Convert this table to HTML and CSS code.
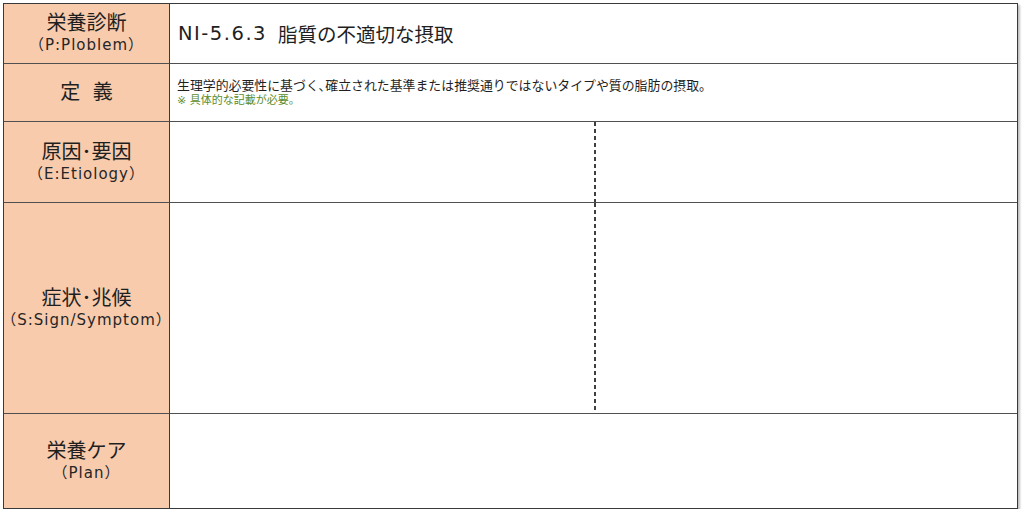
FILE: index.html
```html
<!DOCTYPE html>
<html lang="ja">
<head>
<meta charset="utf-8">
<link rel="stylesheet" href="styles.css">
</head>
<body>
<div class="sheet">
  <div class="label"><div class="main">栄養診断</div><div class="sub">（P:Ploblem）</div></div>
  <div class="cell title"><span class="code">NI-5.6.3</span>脂質の不適切な摂取</div>

  <div class="label"><div class="main wide">定 義</div></div>
  <div class="cell def">
    <div class="def-text">生理学的必要性に基づく､確立された基準または推奨通りではないタイプや質の脂肪の摂取。</div>
    <div class="note">※ 具体的な記載が必要。</div>
  </div>

  <div class="label"><div class="main">原因･要因</div><div class="sub">（E:Etiology）</div></div>
  <div class="cell split"><div class="half"></div><div class="half"></div></div>

  <div class="label"><div class="main">症状･兆候</div><div class="sub">（S:Sign/Symptom）</div></div>
  <div class="cell split"><div class="half"></div><div class="half"></div></div>

  <div class="label"><div class="main">栄養ケア</div><div class="sub">（Plan）</div></div>
  <div class="cell"></div>
</div>
</body>
</html>
```
FILE: styles.css
```css
html, body {
  margin: 0;
  padding: 0;
  background: #ffffff;
}
body {
  padding: 3px 0 0 3px;
  font-family: "DejaVu Sans", "Noto Sans CJK JP", sans-serif;
  color: #262626;
}
.sheet {
  width: 1013px;
  height: 504px;
  display: grid;
  grid-template-columns: 166px 1fr;
  grid-template-rows: 60px 58px 81px 211px 1fr;
  border: 1.5px solid #3a3a3a;
  box-shadow: 2px 2px 2px rgba(0,0,0,0.25);
  box-sizing: content-box;
}
.label {
  background: #f8cbad;
  border-right: 1px solid #3a3a3a;
  border-bottom: 1px solid #505050;
  display: flex;
  flex-direction: column;
  align-items: center;
  justify-content: center;
  text-align: center;
}
.cell {
  border-bottom: 1px solid #505050;
  background: #fff;
}
.label:nth-last-child(2), .cell:last-child {
  border-bottom: none;
}
.main {
  font-size: 20px;
  line-height: 23px;
  color: #1f1f1f;
}
.main.wide {
  letter-spacing: 3px;
  margin-left: 3px;
}
.sub {
  font-size: 15px;
  line-height: 20px;
  letter-spacing: 1px;
  color: #262626;
}
.title {
  display: flex;
  align-items: center;
  padding-left: 8px;
  font-size: 19.5px;
  color: #1f1f1f;
}
.code {
  letter-spacing: 1.5px;
  margin-right: 11px;
}
.def {
  padding: 14px 0 0 7px;
}
.def-text {
  font-size: 12.9px;
  line-height: 16px;
  color: #1f1f1f;
}
.note {
  margin-top: 1px;
  font-size: 11px;
  line-height: 12px;
  color: #5b8c2a;
}
.split {
  display: grid;
  grid-template-columns: 1fr 1fr;
}
.half + .half {
  background-image: linear-gradient(#3f3f3f 0 62%, transparent 62%);
  background-size: 2px 7px;
  background-repeat: repeat-y;
  background-position: 0 0;
}
```
